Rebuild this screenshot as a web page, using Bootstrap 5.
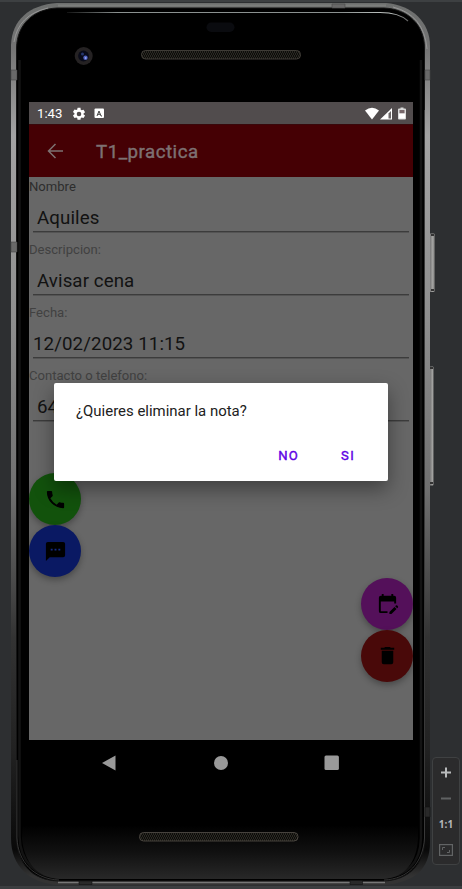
<!DOCTYPE html>
<html lang="es">
<head>
<meta charset="utf-8">
<meta name="viewport" content="width=device-width, initial-scale=1">
<title>T1_practica</title>
<link href="https://cdn.jsdelivr.net/npm/bootstrap@5.3.0/dist/css/bootstrap.min.css" rel="stylesheet">
<style>
body{background:#2d2f31;font-family:Roboto,"Noto Sans",sans-serif;width:462px;height:889px;border-top:2px solid #3d4042;border-bottom:3px solid #3c3e40}
.stage{height:884px}
.handset{width:431px;padding:100px 18px 0 29px}
.shell{position:absolute;left:0;top:-2px;z-index:0;pointer-events:none}
.screen{z-index:1;width:384px;height:638px;background:#676767}
.statusbar{height:22px;background:#514c4d;color:#fff;font-size:13.2px;padding:1px 6px 0 8px}
.statusbar .gear{margin-left:10px}
.appbar{height:53px;background:#450004;border-top:1px solid #38080b;color:#7d7172;padding-left:17px}
.appbar h1{font-size:18.7px;font-weight:400;-webkit-text-stroke:.4px #7d7172;letter-spacing:.5px;margin:2px 0 0 32px;line-height:1}
.field{height:63px}
.field label{display:block;height:18px;line-height:19px;font-size:13.08px;letter-spacing:0;color:#414141}
.field.first label{color:#2d2d2d}
.entry{height:37px;margin:0 4px;padding:2px 0 0 4px;line-height:43px;font-size:18.7px;color:#121212;border-bottom:1px solid #3c3c3c;box-shadow:0 1px 0 #545454;white-space:nowrap;letter-spacing:.1px}
.entry.flush{padding-left:0}
.fabs{padding-top:44px}
.fab{width:52px;height:52px;margin-bottom:.3px;border:0;box-shadow:0 3px 6px rgba(0,0,0,.3)}
.fab.call{background:#12520c}.fab.sms{background:#0a1963}.fab.edit{background:#54105a}.fab.del{background:#490909}
.ask{z-index:2;left:25px;top:281px;width:334px;height:98px;border-radius:2px;box-shadow:0 8px 20px rgba(0,0,0,.4);padding:19px 22px 0}
.ask p{font-size:14.95px;line-height:18px;color:#212121;margin:0}
.ask button{border:0;background:none;padding:0;font-size:13.08px;font-weight:400;-webkit-text-stroke:.4px #5e00e4;letter-spacing:1.3px;line-height:18px;color:#5e00e4}
.ask .choices{padding:3px 11px 0 0;gap:42px}
.navkeys{height:45px;width:384px;z-index:1;padding:0 73px 0 72px}
.zoombar{width:28px;height:108px;margin:755px 0 0 1px;border:1px solid #3f4142;border-radius:4px;background:#2b2b2c;z-index:1;font:bold 10px/12px "Open Sans",sans-serif;color:#b5b7b8}
.zoombar .fit{margin-top:14px}
</style>
<script src="https://cdn.jsdelivr.net/npm/bootstrap@5.3.0/dist/js/bootstrap.bundle.min.js"></script>
</head>
<body class="m-0 overflow-hidden">
<div class="stage d-flex position-relative align-items-start">
<svg class="shell" width="462" height="889" viewBox="0 0 462 889" fill="none">
<defs>
<linearGradient id="metal" x1="0" y1="3" x2="0" y2="885" gradientUnits="userSpaceOnUse">
<stop offset="0" stop-color="#6d6f6e"/><stop offset=".05" stop-color="#747474"/><stop offset=".15" stop-color="#a3a3a3"/><stop offset=".36" stop-color="#8e8e8e"/><stop offset=".55" stop-color="#707070"/><stop offset=".72" stop-color="#333"/><stop offset=".85" stop-color="#212121"/><stop offset=".96" stop-color="#090909"/><stop offset=".99" stop-color="#333"/><stop offset="1" stop-color="#333"/></linearGradient>
<linearGradient id="chin" x1="0" y1="825" x2="0" y2="880" gradientUnits="userSpaceOnUse"><stop stop-color="#000"/><stop offset=".5" stop-color="#111"/><stop offset="1" stop-color="#292929"/></linearGradient>
<linearGradient id="shine" x1="66" y1="0" x2="410" y2="0" gradientUnits="userSpaceOnUse"><stop stop-color="#111"/><stop offset=".15" stop-color="#8b9190"/><stop offset=".8" stop-color="#8b9190"/><stop offset=".94" stop-color="#c2c7c5"/><stop offset="1" stop-color="#555"/></linearGradient>
<pattern id="mesh" width="4" height="4" patternUnits="userSpaceOnUse"><path d="M0 0l2 2-2 2M2 0l2 2-2 2" stroke="#36332c" stroke-width=".7"/></pattern>
<linearGradient id="key" x1="430" y1="0" x2="435" y2="0" gradientUnits="userSpaceOnUse"><stop stop-color="#777"/><stop offset=".55" stop-color="#a5a5a3"/><stop offset="1" stop-color="#70706f"/></linearGradient>
</defs>
<rect x="429" y="233.500" width="5.700" height="58.500" rx="1" fill="url(#key)"/>
<path d="M431 234h3v2h-3zM431 289h3v2h-3z" fill="#333"/>
<rect x="429" y="366.500" width="4.500" height="119" rx="1" fill="url(#key)"/>
<path d="M430 367h3v2h-3zM430 482h3v2h-3z" fill="#333"/>
<path d="M57 3H386C412 5 430 22 430 46V842C430 870 414 882 385 885H58C30 883 11 867 11 838V45C12 20 29 5 57 3Z" fill="url(#metal)"/>
<path d="M57 8H384C408 9 424.500 25 424.500 48V840C424.500 865 408 880 384 881H58C32 880 16.500 864 16.500 836V48C17 24 34 9 57 8Z" fill="#000" stroke="#151515"/>
<path d="M19.500 60V836C20 862 36 877 59 877H384C406 877 420.500 863 421 838V60" stroke="#131313" stroke-width="2.500"/>
<path d="M24 800L29 825H413L418 800V838C417 863 404 878 383 879H60C38 878 24 863 22 838Z" fill="url(#chin)"/>
<path d="M17 760V838C18 862 34 879 59 880M424.500 110V838C423 863 408 879 384 880" stroke="#494949" stroke-width=".7"/>
<path d="M14 42Q18 15 48 8M393 7Q424 15 427 49" stroke="#a0a0a0" stroke-width=".8"/>
<path d="M58 5.500H386" stroke="#7c7e7c" stroke-width="2"/>
<path d="M67 12.500H380Q399 12.500 408 21" stroke="url(#shine)" stroke-width="1.200"/>
<path d="M58 882.500H385" stroke="#777" stroke-width="1.500"/>
<path d="M11 70h6v10h-6zM425 70h5v10h-5zM11 242h6v10h-6zM332 4h13v4h-13z" fill="#696969" stroke="#484848" stroke-width=".6"/>
<path d="M425 807h5v10h-5zM79 881h13v3.500H79zM350 880.500h12.500v4H350z" fill="#292929" stroke="#111" stroke-width=".6"/>
<rect x="206.500" y="22.500" width="28" height="9.500" rx="4.700" fill="#0a0b0f"/>
<circle cx="83.700" cy="56" r="9" fill="#252223"/><circle cx="83.500" cy="56" r="5.400" fill="#090b19"/><circle cx="85.500" cy="57.800" r="2.200" fill="#5264c3"/><circle cx="82.500" cy="54" r="1.500" fill="#26376e"/><circle cx="85.700" cy="58" r=".8" fill="#b9c6ff"/>
<rect x="141.500" y="50.500" width="159" height="8.500" rx="4" fill="#0c0c0a"/><rect x="141.500" y="50.500" width="159" height="8.500" rx="4" fill="url(#mesh)" stroke="#4b4841" stroke-width=".8"/>
<rect x="139.500" y="832.500" width="158.500" height="8.500" rx="4" fill="#0c0c0a"/><rect x="139.500" y="832.500" width="158.500" height="8.500" rx="4" fill="url(#mesh)" stroke="#55514a" stroke-width=".8"/>
</svg>
<main class="handset flex-shrink-0">
<section class="screen position-relative">
<div class="statusbar d-flex align-items-center">
<span>1:43</span>
<svg class="gear flex-shrink-0" width="14" height="14" viewBox="1 1 22 22" fill="#fff"><path d="M19.140 12.940a7 7 0 0 0 0-1.880l2.030-1.580a.5.5 0 0 0 .12-.61l-1.920-3.320a.5.5 0 0 0-.59-.22l-2.390.96a7 7 0 0 0-1.620-.94l-.36-2.540A.5.500 0 0 0 13.930 2h-3.840a.5.500 0 0 0-.47.410l-.36 2.540a7 7 0 0 0-1.620.94l-2.390-.96a.5.500 0 0 0-.59.220L2.740 8.470a.5.500 0 0 0 .12.610l2.030 1.580a7 7 0 0 0 0 1.880l-2.030 1.580a.5.500 0 0 0-.12.610l1.920 3.320c.12.220.37.290.59.220l2.390-.96c.5.380 1.030.700 1.620.940l.36 2.540c.05.240.24.410.48.410h3.840c.24 0 .44-.17.470-.41l.36-2.540a7 7 0 0 0 1.620-.94l2.390.96c.22.080.47 0 .59-.22l1.920-3.320a.5.500 0 0 0-.12-.61zM12 15.600a3.600 3.600 0 1 1 0-7.200 3.600 3.600 0 0 1 0 7.200z"/></svg>
<svg class="ms-2" width="11" height="11" viewBox="0 0 11 11" fill="none"><rect x=".5" y=".5" width="9.500" height="9.500" rx="1" fill="#fff"/><path d="M3 8l2-5 2 5M3.700 6.300h2.700M7 8h1" stroke="#444" stroke-width="1"/></svg>
<svg class="ms-auto" width="42" height="14" viewBox="0 0 42 14" fill="none"><path d="M0 3.500Q7-2 14 3.500L7 12.500Z" fill="#fff"/><path d="M15 12.500L27 1V12.500Z" fill="#fff"/><path d="M23.500 6.500L26 4V11.500H23.500Z" fill="#6b6667"/><path d="M33 2.500q0-1 1-1h1.500V.5h3v1H40q1 0 1 1v9q0 1-1 1h-6q-1 0-1-1z" fill="#d9d9d9"/><path d="M34.500 3h5v3.500h-5z" fill="#77686b"/><path d="M34 6.500h6v5h-6z" fill="#fff"/></svg>
</div>
<header class="appbar d-flex align-items-center">
<svg width="18" height="16" viewBox="0 0 18 16" fill="none" stroke="#7d7172" stroke-width="1.500"><path d="M17 8H3M9.500 1L2.500 8l7 7"/></svg>
<h1>T1_practica</h1>
</header>
<div class="field first"><label>Nombre</label><div class="entry">Aquiles</div></div>
<div class="field"><label>Descripcion:</label><div class="entry">Avisar cena</div></div>
<div class="field"><label>Fecha:</label><div class="entry flush">12/02/2023 11:15</div></div>
<div class="field"><label>Contacto o telefono:</label><div class="entry">64</div></div>
<div class="fabs d-flex flex-column">
<button class="fab call rounded-circle d-flex align-items-center justify-content-center p-0" aria-label="Llamar"><svg width="23" height="23" viewBox="0 0 24 24"><path d="M6.620 10.790a15 15 0 0 0 6.590 6.590l2.200-2.200a1 1 0 0 1 1.020-.24c1.120.37 2.330.57 3.570.57a1 1 0 0 1 1 1V20a1 1 0 0 1-1 1A17 17 0 0 1 3 4a1 1 0 0 1 1-1h3.500a1 1 0 0 1 1 1c0 1.250.2 2.450.57 3.570a1 1 0 0 1-.25 1.020z"/></svg></button>
<button class="fab sms rounded-circle d-flex align-items-center justify-content-center p-0" aria-label="Mensaje"><svg width="23" height="23" viewBox="0 0 24 24"><path d="M20 2H4a2 2 0 0 0-2 2v18l4-4h14a2 2 0 0 0 2-2V4a2 2 0 0 0-2-2z"/><path d="M7 9h2v2H7zM11 9h2v2h-2zM15 9h2v2h-2z" fill="#142a86"/></svg></button>
<button class="fab edit align-self-end rounded-circle d-flex align-items-center justify-content-center p-0" aria-label="Editar"><svg width="23" height="23" viewBox="0 0 24 24"><path d="M12 22H5a2 2 0 0 1-2-2V6a2 2 0 0 1 2-2h1V2h2v2h8V2h2v2h1a2 2 0 0 1 2 2v6h-2v-2H5v10h7zm10.130-5.010.71-.71a1 1 0 0 0 0-1.410l-.71-.71a1 1 0 0 0-1.410 0l-.71.710zm-.71.710-5.300 5.300H14v-2.120l5.300-5.300z"/></svg></button>
<button class="fab del align-self-end rounded-circle d-flex align-items-center justify-content-center p-0" aria-label="Eliminar"><svg width="23" height="23" viewBox="0 0 24 24"><path d="M6 19a2 2 0 0 0 2 2h8a2 2 0 0 0 2-2V7H6zM19 4h-3.500l-1-1h-5l-1 1H5v2h14z"/></svg></button>
</div>
<div class="ask position-absolute bg-white" role="dialog">
<p>¿Quieres eliminar la nota?</p>
<div class="choices d-flex justify-content-end mt-4"><button>NO</button><button>SI</button></div>
</div>
</section>
<nav class="navkeys position-relative d-flex align-items-center justify-content-between">
<svg width="16" height="16" viewBox="0 0 16 16"><path d="M1 8L14.500.5v15z" fill="#999"/></svg>
<svg width="16" height="16" viewBox="0 0 16 16"><circle cx="8" cy="8" r="7" fill="#999"/></svg>
<svg width="16" height="16" viewBox="0 0 16 16"><rect x=".5" y=".5" width="14.400" height="14.400" rx="1.500" fill="#999"/></svg>
</nav>
</main>
<aside class="zoombar position-relative d-flex flex-column align-items-center flex-shrink-0">
<svg width="26" height="52" viewBox="0 0 26 52"><path d="M8 14.500h10M13 9.500v10" stroke="#b9bbbc" stroke-width="2"/><path d="M8 40.500h10" stroke="#606263" stroke-width="2"/></svg>
<span class="mt-2">1:1</span>
<svg class="fit" width="14" height="12" viewBox="0 0 14 12" fill="none" stroke="#626465"><rect x=".6" y=".6" width="12.800" height="10.800" stroke-width="1.200"/><path d="M3.500 6V3.500H6M10.500 6v2.500H8"/></svg>
</aside>
</div>
</body>
</html>
